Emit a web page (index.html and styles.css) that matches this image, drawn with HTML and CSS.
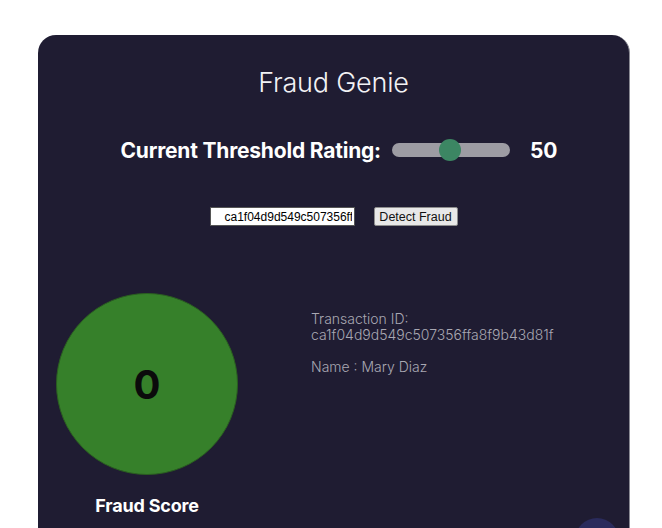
FILE: index.html
```html
<!DOCTYPE html>
<html>
<head>
<meta charset="utf-8">
<link rel="stylesheet" href="styles.css">
</head>
<body>
<div class="card">
  <h1 class="title">Fraud Genie</h1>
  <div class="threshold">
    <span class="label">Current Threshold Rating:</span>
    <div class="slider"><div class="thumb"></div></div>
    <span class="value">50</span>
  </div>
  <div class="search">
    <input class="tx-input" type="text" value="ca1f04d9d549c507356ffa8f9b43d81f">
    <button class="detect">Detect Fraud</button>
  </div>
  <div class="result">
    <div class="score-col">
      <div class="score-circle">0</div>
      <div class="score-label">Fraud Score</div>
    </div>
    <div class="info">
      <p class="info-line">Transaction ID:<br>ca1f04d9d549c507356ffa8f9b43d81f</p>
      <p class="info-line">Name : Mary Diaz</p>
    </div>
  </div>
  <div class="fab"></div>
</div>
</body>
</html>
```
FILE: styles.css
```css
html, body {
  margin: 0;
  padding: 0;
  background: #ffffff;
  overflow: hidden;
}
body {
  font-family: Inter, "Noto Sans", sans-serif;
  height: 528px;
}
.card {
  position: relative;
  margin: 35px 0 0 38px;
  width: 592px;
  height: 493px;
  background: #1f1c32;
  border-radius: 18px 18px 0 0;
  border-right: 1px solid #8a8a94;
  box-sizing: border-box;
  overflow: hidden;
}
.title {
  margin: 0;
  padding-top: 31px;
  text-align: center;
  font-weight: 300;
  font-size: 27px;
  line-height: 34px;
  color: #f2f2f5;
  letter-spacing: -0.2px;
}
.threshold {
  display: flex;
  align-items: center;
  justify-content: center;
  margin-top: 35px;
  height: 30px;
  padding-left: 11px;
}
.label {
  font-size: 21px;
  font-weight: 700;
  color: #ffffff;
  letter-spacing: -0.2px;
}
.slider {
  position: relative;
  width: 118px;
  height: 14px;
  margin-left: 11px;
  margin-right: 20px;
  background: #9d9ca3;
  border-radius: 7px;
}
.thumb {
  position: absolute;
  left: 47px;
  top: -4px;
  width: 22px;
  height: 22px;
  border-radius: 50%;
  background: #3c8663;
}
.value {
  font-size: 21px;
  font-weight: 700;
  color: #ffffff;
}
.search {
  display: flex;
  justify-content: center;
  align-items: center;
  gap: 19px;
  margin-top: 42px;
}
.tx-input {
  width: 145px;
  height: 19px;
  box-sizing: border-box;
  border: 1px solid #555;
  padding: 0 2px 0 6px;
  font-family: "Liberation Sans", Arial, sans-serif;
  font-size: 12px;
  color: #000;
  background: #fff;
  text-align: left;
  text-indent: 8px;
}
.detect {
  width: 84px;
  height: 19px;
  box-sizing: border-box;
  border: 1px solid #8d8d8d;
  border-radius: 2px;
  background: #e8e8e8;
  font-family: "Liberation Sans", Arial, sans-serif;
  font-size: 12.5px;
  color: #111;
  padding: 0;
}
.result {
  display: flex;
  margin-top: 67px;
  padding-left: 18px;
}
.score-col {
  display: flex;
  flex-direction: column;
  align-items: center;
  width: 182px;
}
.score-circle {
  width: 182px;
  height: 182px;
  border-radius: 50%;
  background: #36802a;
  border: 1px solid #2a5e20;
  box-sizing: border-box;
  display: flex;
  align-items: center;
  justify-content: center;
  font-size: 40px;
  font-weight: 700;
  color: #0b0b0b;
}
.score-label {
  margin-top: 20px;
  font-size: 18px;
  font-weight: 700;
  color: #ffffff;
  letter-spacing: -0.2px;
}
.info {
  margin-left: 73px;
  margin-top: 18px;
}
.info-line {
  margin: 0 0 16px 0;
  font-size: 14px;
  font-weight: 300;
  line-height: 16px;
  color: #a9a8b3;
}
.fab {
  position: absolute;
  left: 537px;
  top: 483px;
  width: 44px;
  height: 44px;
  border-radius: 50%;
  background: #2a2b5c;
}
```
